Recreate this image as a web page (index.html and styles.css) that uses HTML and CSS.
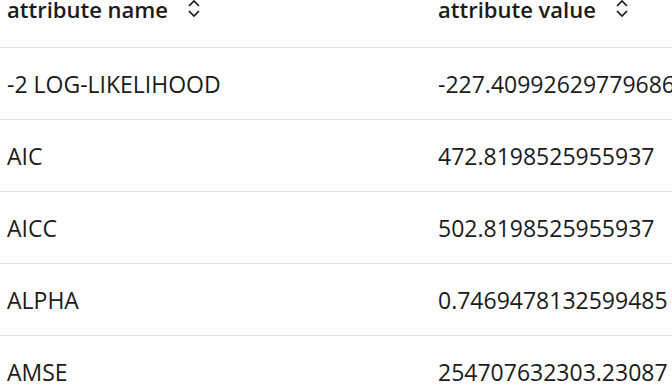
FILE: index.html
```html
<!DOCTYPE html>
<html>
<head>
<meta charset="utf-8">
<link rel="stylesheet" href="styles.css">
</head>
<body>
<div class="table">
  <div class="row head">
    <div class="cell"><span class="label">attribute name</span><svg class="sort" viewBox="0 0 12 17" width="12" height="17"><path d="M1 6 L6 1 L11 6 M1 11 L6 16 L11 11" fill="none" stroke="#1a1a1a" stroke-width="1.7"/></svg></div>
    <div class="cell"><span class="label">attribute value</span><svg class="sort" viewBox="0 0 12 17" width="12" height="17"><path d="M1 6 L6 1 L11 6 M1 11 L6 16 L11 11" fill="none" stroke="#1a1a1a" stroke-width="1.7"/></svg></div>
  </div>
  <div class="row"><div class="cell">-2 LOG-LIKELIHOOD</div><div class="cell">-227.40992629779686</div></div>
  <div class="row"><div class="cell">AIC</div><div class="cell">472.8198525955937</div></div>
  <div class="row"><div class="cell">AICC</div><div class="cell">502.8198525955937</div></div>
  <div class="row"><div class="cell">ALPHA</div><div class="cell">0.7469478132599485</div></div>
  <div class="row"><div class="cell">AMSE</div><div class="cell">254707632303.23087</div></div>
</div>
</body>
</html>
```
FILE: styles.css
```css
html, body {
  margin: 0;
  padding: 0;
  background: #ffffff;
  overflow: hidden;
}
body {
  font-family: "Open Sans", "Noto Sans", sans-serif;
  color: #1b1b1b;
}
.table {
  width: 672px;
  overflow: hidden;
}
.row {
  display: grid;
  grid-template-columns: 431px 241px;
  height: 72px;
  border-bottom: 1px solid #e3e3e3;
  box-sizing: border-box;
  align-items: center;
  font-size: 23px;
  white-space: nowrap;
}
.row.head {
  height: 48px;
  align-items: start;
  font-weight: 600;
  font-size: 22px;
}
.cell {
  padding-left: 7px;
  overflow: hidden;
  display: flex;
  align-items: center;
}
.head .cell {
  overflow: visible;
  align-items: flex-start;
  line-height: 18px;
}
.sort {
  flex: none;
  margin-left: 20px;
  margin-top: 0;
}
```
